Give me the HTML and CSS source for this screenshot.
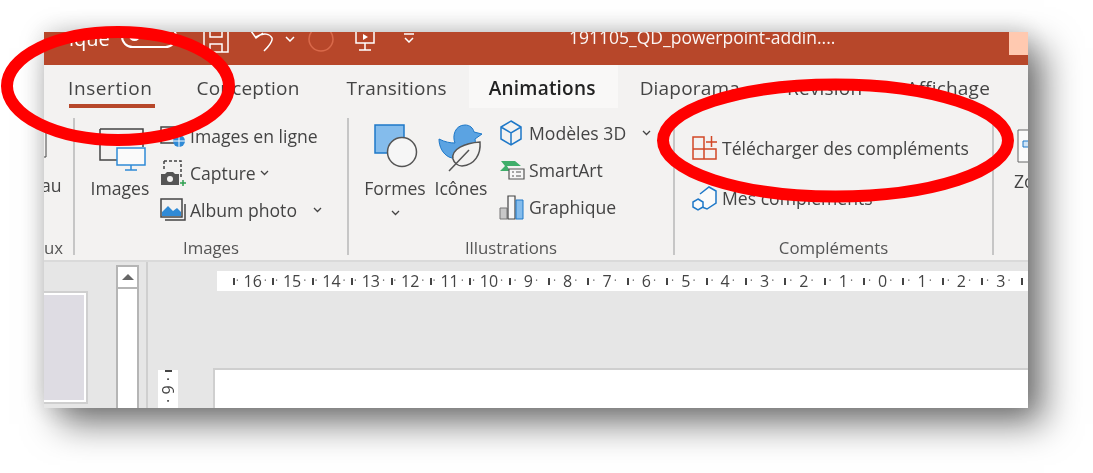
FILE: index.html
```html
<!doctype html>
<html>
<head>
    <title>191105_QD_powerpoint-addin</title>
    <meta charset="utf-8">
    <link rel="stylesheet" href="styles.css">
</head>
<body>
    <div class="window">
        <div class="titlebar">
            <span class="autosave">ique</span>
            <span class="toggle"></span>
            <svg class="qat qat-save" width="26" height="21" viewBox="0 0 26 21"><path d="M1 0v20h24V0M7 20v-8h12v8M7 0v5h12V0"/></svg>
            <svg class="qat qat-undo" width="26" height="24" viewBox="0 0 26 24"><path d="M1 2l5 7 7-5M6 8c8-5 14-3 16 1 1 3-3 8-8 13"/></svg>
            <svg class="qat qat-drop" width="10" height="6" viewBox="0 0 10 6"><path d="M1 1l4 4 4-4"/></svg>
            <svg class="qat qat-redo" width="26" height="22" viewBox="0 0 26 22"><circle cx="13" cy="8" r="12"/></svg>
            <svg class="qat qat-show" width="22" height="22" viewBox="0 0 22 22"><path d="M2 1v11h18V1M11 12v7M5 19h12"/><path class="solid" d="M9 3l5 3-5 3z"/></svg>
            <svg class="qat qat-more" width="12" height="10" viewBox="0 0 12 10"><path d="M1 1h10M2 5l4 4 4-4"/></svg>
            <span class="doc-title">191105_QD_powerpoint-addin....</span>
            <span class="acct"></span>
        </div>

        <div class="tabs">
            <span class="tab tab-ins">Insertion</span>
            <span class="tab tab-con">Conception</span>
            <span class="tab">Transitions</span>
            <span class="tab tab-active">Animations</span>
            <span class="tab">Diaporama</span>
            <span class="tab tab-rev">Révision</span>
            <span class="tab">Affichage</span>
        </div>

        <div class="ribbon">
            <div class="group g-prev">
                <div class="g-body">
                    <div class="big">
                        <svg class="stub" width="14" height="36" viewBox="0 0 14 36"><path d="M0 1h2M0 35h2M2 1v34" /></svg>
                        <span>au</span>
                    </div>
                </div>
                <div class="g-label">ux</div>
            </div>

            <div class="group g-images">
                <div class="g-body">
                    <div class="big big-images">
                        <svg width="52" height="46" viewBox="0 0 52 46">
                            <path class="ln" d="M6 1h43v18M6 1v31h17"/>
                            <path class="ln-b" fill="#fafafa" d="M23 20h28v17H23zM37 37v5M31 42h12"/>
                        </svg>
                        <span>Images</span>
                    </div>
                    <div class="col">
                        <div class="item">
                            <svg width="26" height="24" viewBox="0 0 26 24">
                                <path class="ln" d="M1 3h20v16H1z"/>
                                <circle cx="19" cy="17" r="6" fill="#2f8ad6"/>
                                <path d="M13 17h12M19 11v12" stroke="#fff" fill="none"/>
                            </svg>
                            <span>Images en ligne</span>
                        </div>
                        <div class="item">
                            <svg width="26" height="28" viewBox="0 0 26 28">
                                <path class="ln" stroke-dasharray="3 2" d="M4 2h17v17"/>
                                <path class="ln" stroke-dasharray="3 2" d="M4 2v8"/>
                                <path fill="#555" d="M1 15h4l2-2h6l2 2h4v11H1z"/>
                                <circle cx="10" cy="20" r="3" fill="#f3f2f1"/>
                                <path d="M20 24h6M23 21v6" stroke="#2e9e4f" stroke-width="1.5"/>
                            </svg>
                            <span>Capture</span>
                            <svg class="chev" width="9" height="6" viewBox="0 0 9 6"><path d="M1 1l3.500 3.500L8 1"/></svg>
                        </div>
                        <div class="item">
                            <svg width="26" height="24" viewBox="0 0 26 24">
                                <path class="ln" d="M5 22h20V6"/>
                                <path class="ln" fill="#d3e6f7" d="M1 1h21v18H1z"/>
                                <path fill="#2f8ad6" d="M2 14l6-6 5 5 4-3 4 4v4H2z"/>
                            </svg>
                            <span>Album photo</span>
                            <svg class="chev chev-far" width="9" height="6" viewBox="0 0 9 6"><path d="M1 1l3.500 3.500L8 1"/></svg>
                        </div>
                    </div>
                </div>
                <div class="g-label">Images</div>
            </div>

            <div class="group g-illus">
                <div class="g-body">
                    <div class="big big-formes">
                        <svg width="46" height="46" viewBox="0 0 46 46">
                            <path fill="#84bcec" stroke="#1e78c8" stroke-width="1.500" d="M3 1h29v28H3z"/>
                            <circle cx="30" cy="28" r="14.500" fill="#f6f6f6" stroke="#555" stroke-width="1.500"/>
                        </svg>
                        <span>Formes</span>
                        <svg class="chev" width="9" height="6" viewBox="0 0 9 6"><path d="M1 1l3.500 3.500L8 1"/></svg>
                    </div>
                    <div class="big big-icons">
                        <svg width="46" height="48" viewBox="0 0 46 48">
                            <path fill="#5ba3e2" stroke="#1e78c8" d="M1 15c6 3 11 4 16 4-3-7 0-18 10-18 5 0 8 3 9 7l8 2-7 5c1 4 0 7-2 9-5 8-16 13-24 9C5 30 1 23 1 15z"/>
                            <path fill="#f3f2f1" stroke="#555" stroke-width="1.500" d="M15 35c-2-10 12-16 27-17 1 12-5 23-18 24-4 0-8-3-9-7zM11 47l20-21"/>
                        </svg>
                        <span>Icônes</span>
                    </div>
                    <div class="col col-tight">
                        <div class="item">
                            <svg class="cube" width="24" height="26" viewBox="0 0 24 26">
                                <path fill="none" stroke="#1e78c8" stroke-width="1.500" d="M12 1l10 6v12l-10 6-10-6V7zM2 7l10 6 10-6M12 13v12"/>
                            </svg>
                            <span>Modèles 3D</span>
                            <svg class="chev chev-3d" width="9" height="6" viewBox="0 0 9 6"><path d="M1 1l3.500 3.500L8 1"/></svg>
                        </div>
                        <div class="item">
                            <svg width="26" height="22" viewBox="0 0 26 22">
                                <path fill="#3fae6a" d="M1 12l5-5-4-5h14l6 5H8l3 5z"/>
                                <path fill="#f6f6f6" stroke="#555" stroke-width="1.200" d="M10 10h15v10H10z"/>
                                <path stroke="#555" d="M13 13h2M17 13h5M13 17h2M17 17h5"/>
                            </svg>
                            <span>SmartArt</span>
                        </div>
                        <div class="item">
                            <svg width="26" height="26" viewBox="0 0 26 26">
                                <path fill="#c8c8c8" stroke="#777" d="M1 14h7v11H1z"/>
                                <path fill="#f6f6f6" stroke="#444" stroke-width="1.200" d="M9 2h7v23H9z"/>
                                <path fill="#84bcec" stroke="#1e78c8" d="M17 6h7v19h-7z"/>
                            </svg>
                            <span>Graphique</span>
                        </div>
                    </div>
                </div>
                <div class="g-label">Illustrations</div>
            </div>

            <div class="group g-addins">
                <div class="g-body">
                    <div class="col col-addins">
                        <div class="item">
                            <svg width="26" height="26" viewBox="0 0 26 26">
                                <path fill="none" stroke="#d24726" stroke-width="1.500" d="M1 2h11v22H1zM1 14h23v10H12M14 7h11M19.500 1v11"/>
                            </svg>
                            <span>Télécharger des compléments</span>
                        </div>
                        <div class="item">
                            <svg width="26" height="26" viewBox="0 0 26 26">
                                <path fill="#fafafa" stroke="#1e78c8" stroke-width="1.500" d="M8 9l9-7 7 4v12l-9 6-5-2"/>
                                <path fill="#fafafa" stroke="#1e78c8" stroke-width="1.500" d="M6 14l5 3v5l-5 3-5-3v-5z"/>
                            </svg>
                            <span>Mes compléments</span>
                        </div>
                    </div>
                </div>
                <div class="g-label">Compléments</div>
            </div>

            <div class="group g-zoom">
                <div class="g-body">
                    <div class="big big-zoom">
                        <svg width="24" height="34" viewBox="0 0 24 34">
                            <path fill="#fafafa" stroke="#666" d="M1 1h30v32H1z"/>
                            <path fill="#cfe4f6" stroke="#1e78c8" d="M6 12h18v6H6z"/>
                        </svg>
                        <span>Zoom</span>
                    </div>
                </div>
            </div>
        </div>

        <div class="workspace">
            <div class="thumbs">
                <div class="thumb"></div>
            </div>
            <div class="scrollbar">
                <div class="scroll-up"></div>
                <div class="scroll-track"></div>
            </div>
            <div class="editor">
                <div class="ruler">
                    <span></span><span>16</span><span>15</span><span>14</span><span>13</span><span>12</span><span>11</span><span>10</span>
                    <span>9</span><span>8</span><span>7</span><span>6</span><span>5</span><span>4</span><span>3</span><span>2</span><span>1</span>
                    <span>0</span><span>1</span><span>2</span><span>3</span><span></span>
                </div>
                <div class="stage">
                    <div class="vruler">· 6 ·</div>
                    <div class="slide"></div>
                </div>
            </div>
        </div>
    </div>

    <svg class="marks" width="1093" height="473" viewBox="0 0 1093 473">
        <ellipse cx="118" cy="86" rx="111" ry="54"/>
        <ellipse cx="835.500" cy="140.500" rx="172.500" ry="56"/>
    </svg>
</body>
</html>
```

FILE: styles.css
```css
* {
    margin: 0;
    padding: 0;
    box-sizing: border-box;
}

html, body {
    height: 473px;
    overflow: hidden;
}

body {
    background: #ffffff;
    padding: 32px 0 0 44px;
    position: relative;
    font-family: 'Open Sans', 'Noto Sans', sans-serif;
    color: #444444;
}

.window {
    width: 984px;
    height: 376px;
    overflow: hidden;
    background: #e6e6e6;
    box-shadow: 16px 16px 34px rgba(0, 0, 0, 0.52), 0 0 24px rgba(0, 0, 0, 0.18);
    display: flex;
    flex-direction: column;
    filter: blur(0.4px);
}

.marks {
    position: absolute;
    left: 0;
    top: 0;
}

.marks ellipse {
    fill: none;
    stroke: #ff0000;
    stroke-width: 12;
}

/* title bar */
.titlebar {
    height: 33px;
    flex: none;
    background: #b7472a;
    display: flex;
    align-items: flex-start;
    color: #ffffff;
    position: relative;
}

.autosave {
    font-size: 20px;
    line-height: 20px;
    margin: -3px 0 0 25px;
    width: 52px;
}

.toggle {
    width: 56px;
    height: 23px;
    margin-top: -7px;
    border: 2px solid #ffffff;
    border-radius: 12px;
    display: flex;
    align-items: center;
    padding-left: 6px;
}

.toggle::before {
    content: '';
    width: 11px;
    height: 11px;
    margin-top: -2px;
    border-radius: 50%;
    background: #ffffff;
}

.qat {
    flex: none;
    fill: none;
    stroke: #ffffff;
    stroke-width: 1.5;
}

.qat .solid {
    fill: #ffffff;
    stroke: none;
}

.qat-save { margin: 0 0 0 26px; }
.qat-undo { margin: -3px 0 0 21px; }
.qat-drop { margin: 4px 0 0 9px; }
.qat-redo { margin: -1px 0 0 13px; stroke: #d9694a; }
.qat-show { margin: -1px 0 0 20px; }
.qat-more { margin: 1px 0 0 27px; }

.doc-title {
    font-size: 17.500px;
    line-height: 20px;
    margin: -5px 0 0 154px;
    opacity: 0.95;
}

.acct {
    position: absolute;
    right: 0;
    top: 0;
    width: 19px;
    height: 23px;
    background: #ffc9b0;
}

/* tabs */
.tabs {
    height: 45px;
    flex: none;
    background: #f3f2f1;
    display: flex;
    padding-left: 2px;
    font-size: 19px;
    letter-spacing: 0.2px;
}

.tab {
    height: 43px;
    line-height: 46px;
    padding: 0 22px;
    position: relative;
}

.tab-ins {
    letter-spacing: 0.6px;
    padding-right: 22px;
}

.tab-con {
    padding-right: 25px;
}

.tab-ins::after {
    content: '';
    position: absolute;
    left: 23px;
    right: 20px;
    bottom: 0;
    height: 4px;
    background: #b7472a;
}

.tab-active {
    background: #f9f8f7;
    color: #222222;
    font-weight: 600;
    padding: 0 22px 0 20px;
}

.tab-rev {
    padding-left: 25px;
}

/* ribbon */
.ribbon {
    height: 152px;
    flex: none;
    background: #f3f2f1;
    border-bottom: 2px solid #dadada;
    display: flex;
    font-size: 17.600px;
    padding-top: 8px;
}

.group {
    height: 137px;
    flex: none;
    display: flex;
    flex-direction: column;
    border-right: 2px solid #c6c6c6;
}

.g-body {
    flex: 1;
    display: flex;
    min-height: 0;
}

.g-label {
    text-align: center;
    font-size: 16.800px;
    line-height: 20px;
    margin-bottom: -3px;
    color: #555555;
}

.g-prev { width: 31px; }
.g-prev .g-label { text-align: left; }
.g-images { width: 274px; }
.g-illus { width: 326px; }
.g-addins { width: 319px; }
.g-zoom { border-right: none; }

.big {
    display: flex;
    flex-direction: column;
    align-items: center;
    flex: none;
}

.big > svg { flex: none; }

.big-images { width: 62px; margin: 10px 0 0 14px; }
.big-images span { margin-top: 2px; }
.big-formes { width: 62px; margin: 6px 0 0 15px; }
.big-formes span { margin-top: 6px; }
.big-formes .chev { margin-top: 10px; }
.big-icons { width: 60px; margin: 6px 0 0 5px; }
.big-icons span { margin-top: 4px; }
.big-zoom { margin: 11px 0 0 23px; align-items: flex-start; }
.big-zoom span { margin: 6px 0 0 -3px; }

.g-prev .big { align-items: flex-start; margin-top: 4px; }
.g-prev .stub { margin-bottom: 15px; fill: none; stroke: #444444; }
.g-prev span { margin-left: -3px; }

.ln {
    fill: none;
    stroke: #444444;
    stroke-width: 1.5;
}

.ln-b {
    stroke: #2f8ad6;
    stroke-width: 1.5;
}

.col {
    display: flex;
    flex-direction: column;
    gap: 13px;
    margin: 6px 0 0 9px;
}

.col-tight { gap: 13px; margin: 3px 0 0 8px; }
.col-tight .cube { margin-right: 2px; }
.col-addins { gap: 26px; margin: 18px 0 0 17px; }

.item {
    display: flex;
    align-items: center;
    height: 24px;
    gap: 4px;
    white-space: nowrap;
}

.item > svg:first-child { flex: none; }

.chev {
    fill: none;
    stroke: #444444;
    stroke-width: 1.3;
    flex: none;
}

.chev-far { margin-left: 12px; }
.chev-3d { margin-left: 12px; }

/* bottom area */
.workspace {
    flex: 1;
    display: flex;
    min-height: 0;
    background: #e6e6e6;
}

.thumbs {
    width: 72px;
    flex: none;
    padding-top: 31px;
}

.thumb {
    width: 42px;
    height: 109px;
    background: #dedce3;
    border: 2px solid #ffffff;
    border-left: none;
    outline: 2px solid #cfcfcf;
}

.scrollbar {
    width: 23px;
    flex: none;
    margin-top: 3px;
    border: 2px solid #b5b5b5;
    border-bottom: none;
    background: #ffffff;
    display: flex;
    flex-direction: column;
}

.scroll-up {
    height: 22px;
    flex: none;
    border-bottom: 2px solid #b5b5b5;
    display: flex;
    align-items: center;
    justify-content: center;
}

.scroll-up::before {
    content: '';
    border: 5px solid transparent;
    border-top: none;
    border-bottom: 6px solid #666666;
    border-left-width: 6px;
    border-right-width: 6px;
}

.editor {
    flex: 1;
    min-width: 0;
    margin-left: 7px;
    border-left: 2px solid #cfcfcf;
    padding-top: 9px;
    overflow: hidden;
}

.ruler {
    height: 20px;
    margin-left: 69px;
    background: #ffffff;
    display: flex;
    overflow: hidden;
}

.ruler span {
    width: 39.375px;
    flex: none;
    display: grid;
    grid-template-columns: 1fr auto 1fr;
    align-items: center;
    font-size: 16px;
    line-height: 20px;
    column-gap: 2px;
    background: linear-gradient(#444444, #444444) 0 50% / 2px 7px no-repeat;
}

.ruler span:first-child {
    margin-left: -23.375px;
}

.ruler span:first-child::after {
    justify-self: end;
    margin-right: 11px;
}

.ruler span::before,
.ruler span::after {
    content: '·';
    font-size: 12px;
    color: #777777;
}

.ruler span::before { justify-self: center; }
.ruler span::after { justify-self: start; }

.stage {
    display: flex;
    margin-top: 77px;
}

.vruler {
    width: 20px;
    height: 60px;
    margin: 2px 0 0 10px;
    padding-top: 7px;
    flex: none;
    background: #ffffff linear-gradient(#444444, #444444) 50% 0 / 7px 2px no-repeat;
    writing-mode: vertical-rl;
    font-size: 16px;
    line-height: 20px;
}

.slide {
    flex: 1;
    height: 60px;
    margin-left: 35px;
    background: #ffffff;
    border-top: 2px solid #cfcfcf;
    border-left: 2px solid #cfcfcf;
}
```
